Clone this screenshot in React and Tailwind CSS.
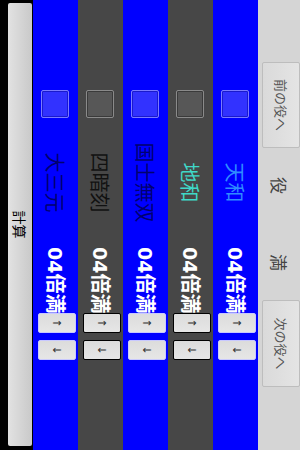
import React from 'react'

const ROWS = [
  { name: '天和', color: 'text-[#2f8cff]', bg: 'bg-[#0000ff]', dark: false },
  { name: '地和', color: 'text-[#3fd8c8]', bg: 'bg-[#474747]', dark: true },
  { name: '国士無双', color: 'text-[#00006e]', bg: 'bg-[#0000ff]', dark: false },
  { name: '四暗刻', color: 'text-[#111111]', bg: 'bg-[#474747]', dark: true },
  { name: '大三元', color: 'text-[#00006e]', bg: 'bg-[#0000ff]', dark: false },
]

const cjk = "font-['Noto_Sans_CJK_JP',sans-serif]"

function StepButton({ label, dark }) {
  return (
    <button
      className={`w-[20px] h-[38px] rounded-[2px] flex items-center justify-center text-[11px] leading-none text-[#333] bg-gradient-to-r from-[#dcdcdc] to-[#e6e6e6] ${
        dark ? 'border border-black' : 'border border-[#c8c8ff]'
      } font-['DejaVu_Sans',sans-serif]`}
    >
      {label}
    </button>
  )
}

function YakuRow({ row }) {
  return (
    <div className={`h-[45px] flex items-center ${row.bg}`}>
      <div
        className={`ml-[90px] w-[28px] h-[28px] rounded-[2px] border ${
          row.dark
            ? 'bg-[#575757] border-[#8a8a8a] shadow-[inset_0_0_0_1px_#3a3a3a]'
            : 'bg-[#3232ff] border-[#7a7aff] shadow-[inset_0_0_0_1px_#1a1acc]'
        }`}
      />
      <div className={`w-[129px] text-center text-[20px] leading-none ${cjk} ${row.color}`}>{row.name}</div>
      <div className="w-[66px] text-[20px] leading-none font-bold text-white whitespace-nowrap">
        <span className="font-['DejaVu_Sans',sans-serif] text-[19px]">04</span>
        <span className={cjk}>倍満</span>
      </div>
      <div className="flex gap-[7px] self-start mt-[2px]">
        <StepButton label="↑" dark={row.dark} />
        <StepButton label="↓" dark={row.dark} />
      </div>
    </div>
  )
}

function NavButton({ children, className }) {
  return (
    <button
      className={`h-[38px] rounded-[2px] border border-[#bdbdbd] bg-gradient-to-b from-[#e4e4e4] to-[#dadada] text-[13px] text-[#555] ${cjk} ${className}`}
    >
      {children}
    </button>
  )
}

export default function App() {
  return (
    <div className="w-[300px] h-[450px] overflow-hidden bg-black">
      {/* screen is drawn in landscape and turned a quarter clockwise */}
      <div className="w-[450px] h-[300px] origin-top-left rotate-90 translate-x-[300px] bg-black flex flex-col">
        {/* header */}
        <div className="h-[42px] bg-[#d5d5d5] flex items-start">
          <NavButton className="ml-[62px] w-[86px]">前の役へ</NavButton>
          <div className={`w-[152px] h-[42px] flex items-center justify-between px-[29px] text-[17px] text-[#444] ${cjk}`}>
            <span>役</span>
            <span>満</span>
          </div>
          <NavButton className="w-[87px]">次の役へ</NavButton>
        </div>

        {/* yaku list */}
        {ROWS.map((row) => (
          <YakuRow key={row.name} row={row} />
        ))}

        {/* calc button */}
        <div className="pt-[1px] px-[3px] pr-[4px]">
          <button
            className={`w-full h-[24px] rounded-[2px] bg-gradient-to-t from-[#e2e2e2] to-[#c9c9c9] text-[14px] leading-none text-black ${cjk}`}
          >
            計算
          </button>
        </div>
      </div>
    </div>
  )
}
